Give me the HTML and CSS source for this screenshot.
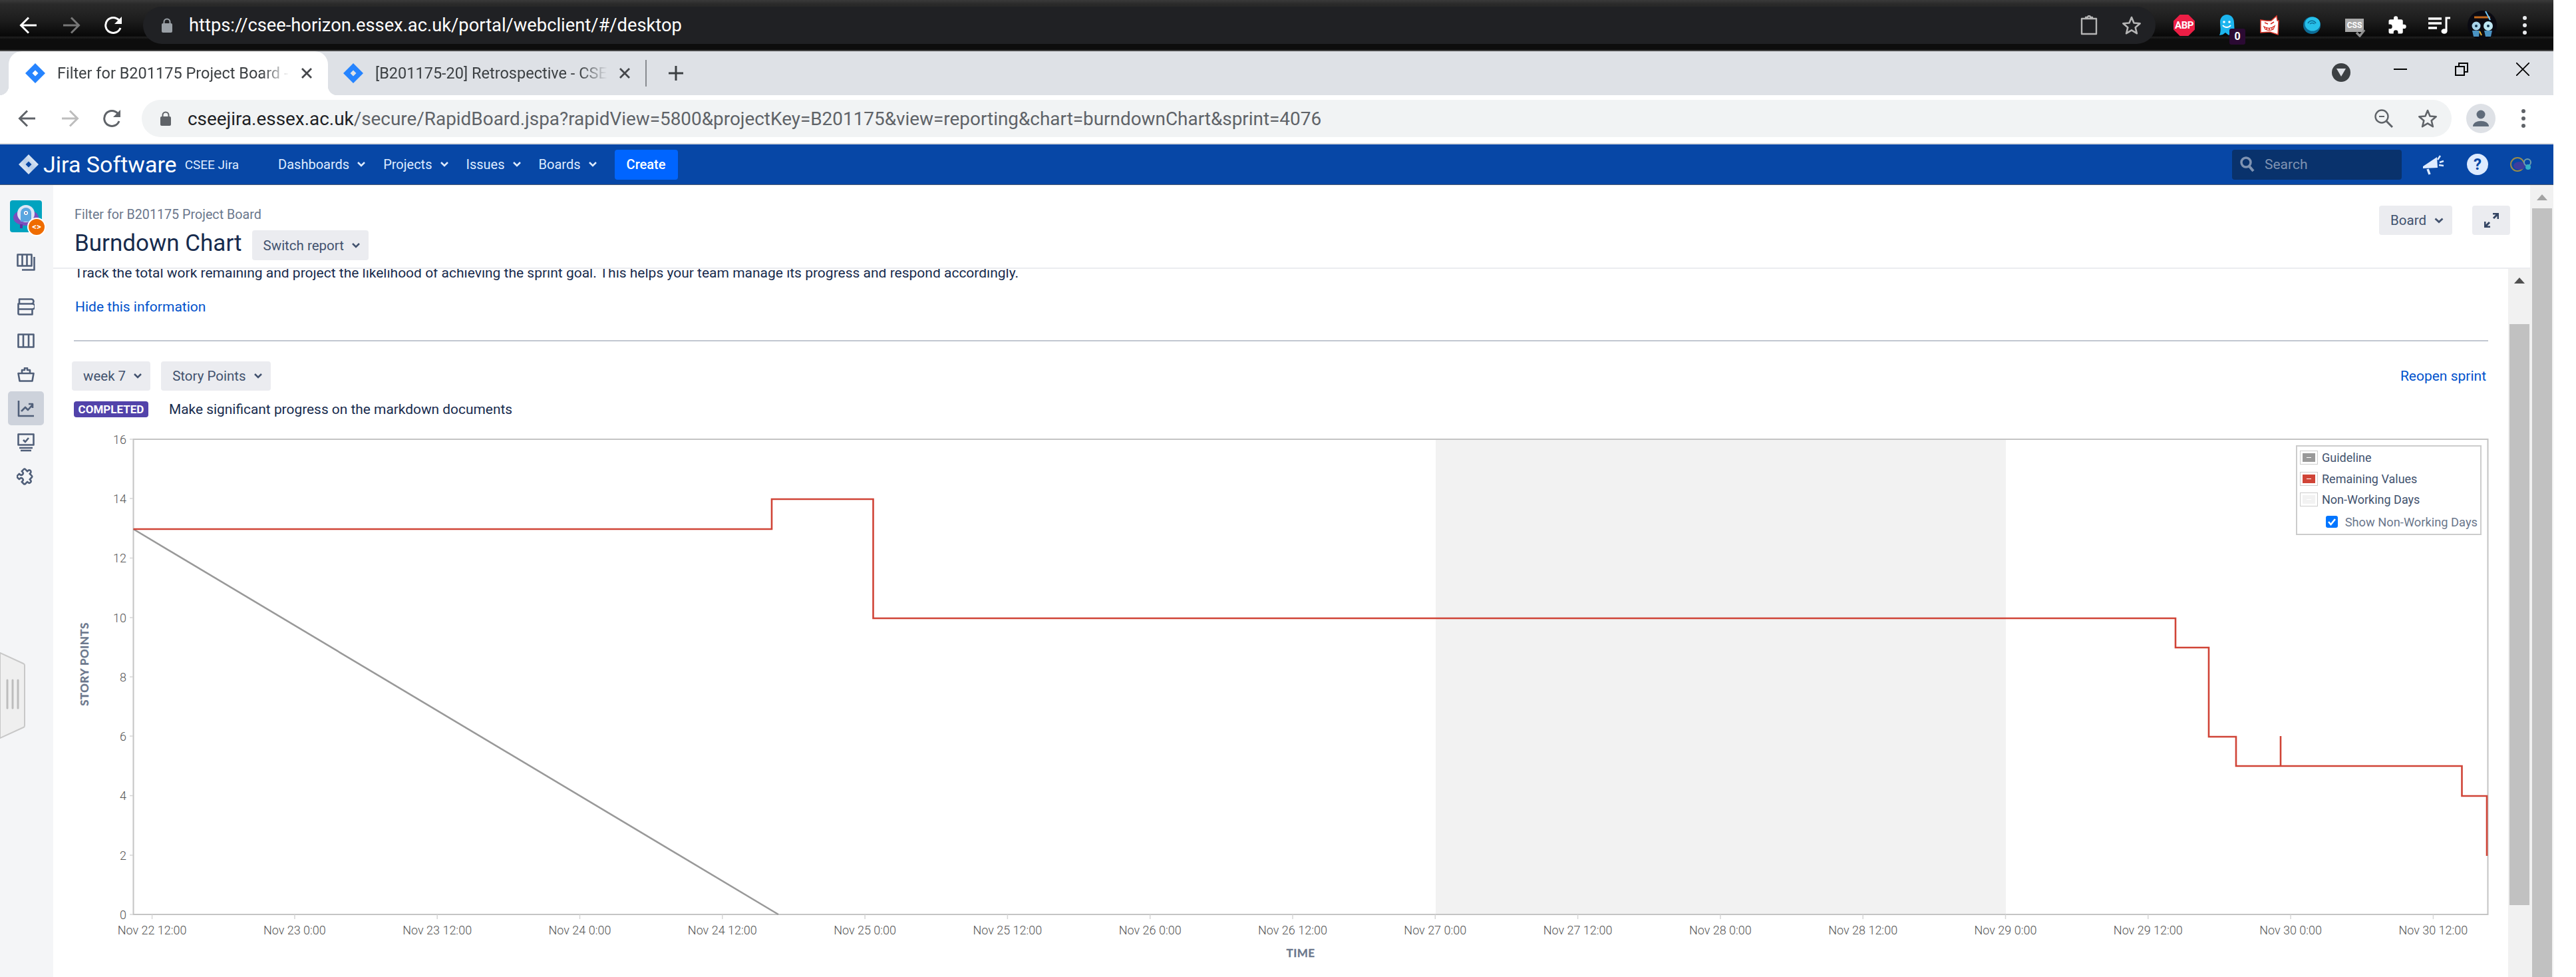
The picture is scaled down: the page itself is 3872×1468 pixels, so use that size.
FILE: index.html
```html
<!DOCTYPE html>
<html lang="en">
<head>
    <meta charset="UTF-8">
    <title>Burndown Chart - CSEE Jira</title>
    <link rel="stylesheet" href="styles.css">
</head>
<body>
<div class="window">
    <!-- outer dark browser toolbar -->
    <div class="dark-bar">
        <div class="nav-btn"><svg width="28" height="28" viewBox="0 0 28 28"><path d="M26 14H3M14 2.5 2.5 14 14 25.5" class="ico-white"/></svg></div>
        <div class="nav-btn"><svg width="28" height="28" viewBox="0 0 28 28"><path d="M2 14h23M14 2.5 25.5 14 14 25.5" class="ico-dim"/></svg></div>
        <div class="nav-btn"><svg width="30" height="28" viewBox="0 0 30 28"><path d="M25 18a11.5 11.5 0 1 1-2-11.5" class="ico-white"/><path d="M27 1v11H16z" fill="#fff"/></svg></div>
        <div class="omni omni-dark">
            <svg class="lock" width="16" height="22" viewBox="0 0 16 22"><path d="M3.5 9V6a4.5 4.5 0 0 1 9 0v3" fill="none" stroke="#9aa0a6" stroke-width="2"/><rect y="8" width="16" height="14" rx="2" fill="#9aa0a6"/></svg>
            <span class="url url-light">https://csee-horizon.essex.ac.uk/portal/webclient/#/desktop</span>
            <svg class="omni-end" width="26" height="30" viewBox="0 0 26 30"><path d="M2 5h22v23H2zM8 5V3h3a2 2 0 0 1 4 0h3v2z" fill="none" stroke="#b5b5b5" stroke-width="2.4" stroke-linejoin="round"/></svg>
            <svg class="omni-star" width="30" height="30" viewBox="0 0 30 30"><path d="m15 3 3.5 8.5 9.2.7-7 6 2.2 9-7.9-4.8-7.9 4.8 2.2-9-7-6 9.2-.7z" fill="none" stroke="#b5b5b5" stroke-width="2.6" stroke-linejoin="round"/></svg>
        </div>
        <div class="ext-row">
            <div class="ext"><div class="abp">ABP</div></div>
            <div class="ext">
                <svg width="26" height="32" viewBox="0 0 26 32"><path d="M13 0c7 0 11 5 11 12l1 18-5-3-4 4-5-4-4 3-5 1c3-6 1-13 1-20C3 5 7 0 13 0z" fill="#1cb5ee"/><circle cx="9" cy="11" r="1.8" fill="#fff"/><circle cx="17" cy="11" r="1.8" fill="#fff"/><path d="M7 16c3 4 9 4 12 0" fill="none" stroke="#fff" stroke-width="2"/></svg>
                <span class="ext-badge">0</span>
            </div>
            <div class="ext"><svg width="30" height="32" viewBox="0 0 30 32"><path d="M2 8c6 1 12 2 16 1l8-7 1 7 2 0-1 21-12-4-14 1z" fill="#fff" stroke="#e03a2e" stroke-width="1.5"/><path d="M7 18c5 3 11 3 16-1l-2 5c-4 2-8 2-12 0z" fill="#fff" stroke="#d9281e" stroke-width="1.2"/><path d="M8 12l5 2M22 11l-5 3M11 19v3M15 20v3M19 19v3" stroke="#d9281e" stroke-width="1.5"/></svg></div>
            <div class="ext"><svg width="28" height="28" viewBox="0 0 28 28"><circle cx="14" cy="14" r="13" fill="#0d6c96"/><ellipse cx="15" cy="12" rx="11.5" ry="10.5" fill="#27c0ea"/><path d="M8 11c3-5 9-5 12 0M11 12c2-2 5-2 7 0" fill="none" stroke="#0d6c96" stroke-width="1.5"/></svg></div>
            <div class="ext"><div class="css-ico">CSS<svg class="css-check" width="16" height="14" viewBox="0 0 16 14"><path d="m2 7 5 5 7-9" fill="none" stroke="#8e8e8e" stroke-width="3.5"/></svg></div></div>
            <div class="ext"><svg width="30" height="30" viewBox="0 0 24 24"><path fill="#fff" d="M20.5 11H19V7a2 2 0 0 0-2-2h-4V3.5a2.5 2.5 0 0 0-5 0V5H4a2 2 0 0 0-2 2v3.8h1.5a2.7 2.7 0 0 1 0 5.4H2V20a2 2 0 0 0 2 2h3.8v-1.5a2.7 2.7 0 0 1 5.4 0V22H17a2 2 0 0 0 2-2v-4h1.5a2.5 2.5 0 0 0 0-5z"/></svg></div>
            <div class="ext"><svg width="34" height="26" viewBox="0 0 34 26"><path d="M0 3h20M0 10h20M0 17h13" stroke="#fff" stroke-width="3.4"/><path d="M27 22V2h6" fill="none" stroke="#fff" stroke-width="3"/><ellipse cx="24" cy="22" rx="4.5" ry="3.8" fill="#fff"/></svg></div>
            <div class="ext"><svg width="44" height="44" viewBox="0 0 44 44"><circle cx="22" cy="22" r="22" fill="#0a0a12"/><path d="M10 10h24" stroke="#c56a1c" stroke-width="3"/><path d="M27 1l7 13" stroke="#6fc6f4" stroke-width="2"/><circle cx="13" cy="23" r="6.5" fill="#a9d3ea"/><circle cx="31" cy="23" r="7" fill="#bfe6f2"/><path d="M7 30h11l-1 9h-8zM25 30h12l-2 9h-8z" fill="#4a93c4"/><circle cx="13" cy="23" r="2" fill="#10304a"/><circle cx="31" cy="23" r="2" fill="#10304a"/><path d="M18 31l3 6" stroke="#e8b23a" stroke-width="2"/></svg></div>
            <div class="ext"><div class="kebab kebab-light"><i></i><i></i><i></i></div></div>
        </div>
    </div>

    <!-- tab strip -->
    <div class="tabstrip">
        <div class="tab tab-active">
            <svg class="favicon" width="30" height="30" viewBox="0 0 30 30"><path fill-rule="evenodd" fill="#2684ff" d="M15 0 30 15 15 30 0 15zM15 10.5 10.5 15 15 19.5 19.5 15z"/></svg>
            <span class="tab-title">Filter for B201175 Project Board - CSEE Jira</span>
            <svg class="tab-x" width="16" height="16" viewBox="0 0 16 16"><path d="m1 1 14 14M15 1 1 15" stroke="#45474b" stroke-width="2.8"/></svg>
        </div>
        <div class="tab tab-idle">
            <svg class="favicon" width="30" height="30" viewBox="0 0 30 30"><path fill-rule="evenodd" fill="#2684ff" d="M15 0 30 15 15 30 0 15zM15 10.5 10.5 15 15 19.5 19.5 15z"/></svg>
            <span class="tab-title">[B201175-20] Retrospective - CSEE Jira</span>
            <svg class="tab-x" width="16" height="16" viewBox="0 0 16 16"><path d="m1 1 14 14M15 1 1 15" stroke="#45474b" stroke-width="2.8"/></svg>
        </div>
        <div class="tab-sep"></div>
        <svg class="tab-plus" width="24" height="24" viewBox="0 0 24 24"><path d="M12 1v22M1 12h22" stroke="#3c4043" stroke-width="3"/></svg>
        <div class="tab-search"><svg width="14" height="12" viewBox="0 0 14 12"><path d="M0 0h14L7 12z" fill="#dee1e6"/></svg></div>
        <div class="win-controls">
            <div class="win-btn"><svg width="20" height="20" viewBox="0 0 20 20"><path d="M0 10h20" stroke="#000" stroke-width="2"/></svg></div>
            <div class="win-btn"><svg width="20" height="20" viewBox="0 0 20 20"><path d="M1 6h13v13H1zM6 6V1h13v13h-5" fill="none" stroke="#000" stroke-width="2"/></svg></div>
            <div class="win-btn"><svg width="20" height="20" viewBox="0 0 20 20"><path d="m0 0 20 20M20 0 0 20" stroke="#000" stroke-width="1.8"/></svg></div>
        </div>
    </div>

    <!-- light browser toolbar -->
    <div class="toolbar">
        <div class="nav-btn"><svg width="28" height="28" viewBox="0 0 28 28"><path d="M26 14H3M14 2.5 2.5 14 14 25.5" class="ico-grey"/></svg></div>
        <div class="nav-btn"><svg width="28" height="28" viewBox="0 0 28 28"><path d="M2 14h23M14 2.5 25.5 14 14 25.5" class="ico-faint"/></svg></div>
        <div class="nav-btn"><svg width="30" height="28" viewBox="0 0 30 28"><path d="M25 18a11.5 11.5 0 1 1-2-11.5" class="ico-grey"/><path d="M27 1v11H16z" fill="#5f6368"/></svg></div>
        <div class="omni omni-light">
            <svg class="lock" width="16" height="22" viewBox="0 0 16 22"><path d="M3.5 9V6a4.5 4.5 0 0 1 9 0v3" fill="none" stroke="#5f6368" stroke-width="2"/><rect y="8" width="16" height="14" rx="2" fill="#5f6368"/></svg>
            <span class="url url-dark"><b>cseejira.essex.ac.uk</b>/secure/RapidBoard.jspa?rapidView=5800&amp;projectKey=B201175&amp;view=reporting&amp;chart=burndownChart&amp;sprint=4076</span>
            <svg class="omni-end" width="28" height="28" viewBox="0 0 28 28"><circle cx="11" cy="11" r="9.5" fill="none" stroke="#5f6368" stroke-width="2.4"/><path d="M7 11h8" stroke="#5f6368" stroke-width="2"/><path d="m18 18 9 9" stroke="#5f6368" stroke-width="3"/></svg>
            <svg class="omni-star" width="30" height="30" viewBox="0 0 30 30"><path d="m15 3 3.5 8.5 9.2.7-7 6 2.2 9-7.9-4.8-7.9 4.8 2.2-9-7-6 9.2-.7z" fill="none" stroke="#5f6368" stroke-width="2.6" stroke-linejoin="round"/></svg>
        </div>
        <div class="toolbar-end">
            <div class="ext"><div class="profile"><svg width="26" height="26" viewBox="0 0 26 26"><circle cx="13" cy="7" r="6.5" fill="#5f6b7a"/><path d="M1 25c0-11 24-11 24 0z" fill="#5f6b7a"/></svg></div></div>
            <div class="ext"><div class="kebab kebab-grey"><i></i><i></i><i></i></div></div>
        </div>
    </div>

    <!-- jira top nav -->
    <div class="navbar">
        <svg class="jira-logo" width="30" height="30" viewBox="0 0 30 30"><defs><linearGradient id="logoFade" x1="0" y1="1" x2="1" y2="0"><stop offset="0" stop-color="#fff"/><stop offset=".5" stop-color="#b8cde8"/><stop offset="1" stop-color="#fff"/></linearGradient></defs><path fill-rule="evenodd" fill="url(#logoFade)" d="M15 0 30 15 15 30 0 15zM15 10.5 10.5 15 15 19.5 19.5 15z"/></svg>
        <span class="brand">Jira Software</span>
        <span class="brand-sub">CSEE Jira</span>
        <div class="nav-menu">
            <a class="nav-item">Dashboards<svg class="chev" width="12" height="8" viewBox="0 0 12 8"><path d="m1 1 5 5 5-5" fill="none" stroke="#deebff" stroke-width="2.5"/></svg></a>
            <a class="nav-item">Projects<svg class="chev" width="12" height="8" viewBox="0 0 12 8"><path d="m1 1 5 5 5-5" fill="none" stroke="#deebff" stroke-width="2.5"/></svg></a>
            <a class="nav-item">Issues<svg class="chev" width="12" height="8" viewBox="0 0 12 8"><path d="m1 1 5 5 5-5" fill="none" stroke="#deebff" stroke-width="2.5"/></svg></a>
            <a class="nav-item">Boards<svg class="chev" width="12" height="8" viewBox="0 0 12 8"><path d="m1 1 5 5 5-5" fill="none" stroke="#deebff" stroke-width="2.5"/></svg></a>
        </div>
        <button class="create-btn">Create</button>
        <div class="nav-right">
            <div class="nav-search">
                <svg width="22" height="24" viewBox="0 0 22 24"><circle cx="9" cy="9" r="7" fill="none" stroke="#7f93b2" stroke-width="3.5"/><path d="m14 15 6 7" stroke="#7f93b2" stroke-width="4"/></svg>
                <span>Search</span>
            </div>
            <svg class="nav-ico nav-feedback" width="32" height="32" viewBox="0 0 32 32"><path d="M0 19 21 5l1 16-22 1z" fill="#deebff"/><path d="m7 23 3 8" stroke="#deebff" stroke-width="3.5"/><path d="m22 9 4-6M25 13l6-2M24 17l7 1" stroke="#deebff" stroke-width="2.5"/></svg>
            <div class="nav-help">?</div>
            <svg class="nav-avatar" width="34" height="26" viewBox="0 0 34 26"><circle cx="11" cy="13" r="10" fill="none" stroke="#9b8b4a" stroke-width="2"/><ellipse cx="14" cy="15" rx="9" ry="6" fill="#3d3d9e"/><circle cx="26" cy="10" r="5" fill="none" stroke="#6f9fae" stroke-width="2"/><circle cx="27" cy="17" r="4" fill="#33b0c8"/></svg>
        </div>
    </div>

    <div class="main">
        <div class="sidebar">
            <div class="project-avatar">
                <svg width="48" height="48" viewBox="0 0 48 48"><rect width="48" height="48" rx="4" fill="#00a3bf"/><ellipse cx="24" cy="26" rx="19" ry="12" fill="#7a4fbd"/><path d="M15 36h4v6h-4zM28 36h4v4h-4z" fill="#5a33a0"/><circle cx="24" cy="20" r="13" fill="#dfe6f6"/><path d="M16 32V19a8 8 0 0 1 16 0v13z" fill="#5aa6e0"/><circle cx="24" cy="19" r="3" fill="#fff"/><circle cx="24" cy="19" r="1.2" fill="#3a4f8f"/></svg>
                <div class="avatar-badge">&lt;&gt;</div>
            </div>
            <div class="side-ico side-first"><svg width="28" height="26" viewBox="0 0 28 26"><path d="M1.5 1.5h21v17h-21zM8.5 1.5v17M15.5 1.5v17" class="side-stroke"/><path d="M26.5 5v19.5H8" class="side-stroke"/></svg></div>
            <div class="side-ico"><svg width="26" height="26" viewBox="0 0 26 26"><path d="M3 1.5h18a3 3 0 0 1 0 7H3zM1.5 8.5h21a3 3 0 0 1 0 8h-21zM1.5 16.5h21v8H3a1.5 1.5 0 0 1-1.5-1.5z" class="side-stroke"/></svg></div>
            <div class="side-ico"><svg width="26" height="22" viewBox="0 0 26 22"><path d="M1.5 1.5h23v19h-23zM9 1.5v19M17 1.5v19" class="side-stroke"/></svg></div>
            <div class="side-ico"><svg width="26" height="22" viewBox="0 0 26 22"><path d="M7 9V4h4V1h4v3h4v5M1.5 9h23l-2 11.5H3.5z" class="side-stroke"/></svg></div>
            <div class="side-ico side-selected"><svg width="26" height="26" viewBox="0 0 26 26"><path d="M2 1v23h23" class="side-stroke"/><path d="m6 17 6-6 4 4 7-8M17 6h6v6" class="side-stroke"/></svg></div>
            <div class="side-ico"><svg width="26" height="28" viewBox="0 0 26 28"><path d="M1.5 1.5h23v16h-23zM3 22h20M5 26h16" class="side-stroke"/><path d="m9 10 3 3 5-6" class="side-stroke"/></svg></div>
            <div class="side-ico"><svg width="28" height="28" viewBox="0 0 24 24"><path class="side-stroke" d="M20.5 11H19V7a2 2 0 0 0-2-2h-4V3.5a2.5 2.5 0 0 0-5 0V5H4a2 2 0 0 0-2 2v3.8h1.5a2.7 2.7 0 0 1 0 5.4H2V20a2 2 0 0 0 2 2h3.8v-1.5a2.7 2.7 0 0 1 5.4 0V22H17a2 2 0 0 0 2-2v-4h1.5a2.5 2.5 0 0 0 0-5z" transform="rotate(45 12 12) scale(.86) translate(2 2)"/></svg></div>
        </div>

        <div class="content">
            <div class="page-head">
                <div>
                    <div class="board-name">Filter for B201175 Project Board</div>
                    <div class="title-row">
                        <h1>Burndown Chart</h1>
                        <button class="aui-btn switch-btn">Switch report<svg class="chev" width="12" height="8" viewBox="0 0 12 8"><path d="m1 1 5 5 5-5" fill="none" stroke="#42526e" stroke-width="2.5"/></svg></button>
                    </div>
                </div>
                <div class="head-actions">
                    <button class="aui-btn">Board<svg class="chev" width="14" height="9" viewBox="0 0 14 9"><path d="m1.5 1.5 5.5 5 5.5-5" fill="none" stroke="#42526e" stroke-width="2.8"/></svg></button>
                    <button class="aui-btn expand-btn"><svg width="22" height="22" viewBox="0 0 22 22"><path d="M13 1h8v8M21 1l-7 7M9 21H1v-8M1 21l7-7" fill="none" stroke="#344563" stroke-width="3"/></svg></button>
                </div>
            </div>

            <div class="panel">
                <div class="panel-body">
                    <p class="intro">Track the total work remaining and project the likelihood of achieving the sprint goal. This helps your team manage its progress and respond accordingly.</p>
                    <a class="hide-link">Hide this information</a>
                    <hr class="rule">
                    <div class="filters">
                        <button class="aui-btn">week 7<svg class="chev" width="12" height="8" viewBox="0 0 12 8"><path d="m1 1 5 5 5-5" fill="none" stroke="#42526e" stroke-width="2.5"/></svg></button>
                        <button class="aui-btn">Story Points<svg class="chev" width="12" height="8" viewBox="0 0 12 8"><path d="m1 1 5 5 5-5" fill="none" stroke="#42526e" stroke-width="2.5"/></svg></button>
                        <a class="reopen">Reopen sprint</a>
                    </div>
                    <div class="sprint-row">
                        <span class="lozenge">COMPLETED</span>
                        <span class="sprint-goal">Make significant progress on the markdown documents</span>
                    </div>

                    <div class="chart">
                        <svg class="chart-svg" width="3630" height="818" viewBox="111 650 3630 818">
                            <rect x="2158" y="660" width="857" height="714" class="nonworking"/>
                            <path d="M200.5 660H3739.5V1374H200.5Z" class="frame"/>
                            <path d="M195 660h5M195 749h5M195 838.5h5M195 928h5M195 1017h5M195 1106h5M195 1195.5h5M195 1285h5M195 1374h5" class="ticks"/>
                            <path d="M228.6 1374v7M442.9 1374v7M657.2 1374v7M871.5 1374v7M1085.8 1374v7M1300.1 1374v7M1514.4 1374v7M1728.7 1374v7M1943 1374v7M2157.3 1374v7M2371.6 1374v7M2585.9 1374v7M2800.2 1374v7M3014.5 1374v7M3228.8 1374v7M3443.1 1374v7M3657.4 1374v7" class="ticks"/>

                            <text x="190" y="667" class="tick-y">16</text>
                            <text x="190" y="756" class="tick-y">14</text>
                            <text x="190" y="845" class="tick-y">12</text>
                            <text x="190" y="935" class="tick-y">10</text>
                            <text x="190" y="1024" class="tick-y">8</text>
                            <text x="190" y="1113" class="tick-y">6</text>
                            <text x="190" y="1202" class="tick-y">4</text>
                            <text x="190" y="1292" class="tick-y">2</text>
                            <text x="190" y="1381" class="tick-y">0</text>

                            <text x="228.6" y="1404" class="tick-x">Nov 22 12:00</text>
                            <text x="442.9" y="1404" class="tick-x">Nov 23 0:00</text>
                            <text x="657.2" y="1404" class="tick-x">Nov 23 12:00</text>
                            <text x="871.5" y="1404" class="tick-x">Nov 24 0:00</text>
                            <text x="1085.8" y="1404" class="tick-x">Nov 24 12:00</text>
                            <text x="1300.1" y="1404" class="tick-x">Nov 25 0:00</text>
                            <text x="1514.4" y="1404" class="tick-x">Nov 25 12:00</text>
                            <text x="1728.7" y="1404" class="tick-x">Nov 26 0:00</text>
                            <text x="1943" y="1404" class="tick-x">Nov 26 12:00</text>
                            <text x="2157.3" y="1404" class="tick-x">Nov 27 0:00</text>
                            <text x="2371.6" y="1404" class="tick-x">Nov 27 12:00</text>
                            <text x="2585.9" y="1404" class="tick-x">Nov 28 0:00</text>
                            <text x="2800.2" y="1404" class="tick-x">Nov 28 12:00</text>
                            <text x="3014.5" y="1404" class="tick-x">Nov 29 0:00</text>
                            <text x="3228.8" y="1404" class="tick-x">Nov 29 12:00</text>
                            <text x="3443.1" y="1404" class="tick-x">Nov 30 0:00</text>
                            <text x="3657.4" y="1404" class="tick-x">Nov 30 12:00</text>

                            <text x="1955" y="1438" class="axis-title">TIME</text>
                            <text x="133" y="998" class="axis-title" transform="rotate(-90 133 998)">STORY POINTS</text>

                            <path d="M200.5 795 1170 1374" class="guideline"/>
                            <path d="M200.5 795H1160V750H1312.5V929H3270V973H3320V1107H3361V1151H3700.5V1196H3738V1286" class="remaining"/>
                            <path d="M3428 1151V1106" class="remaining"/>
                        </svg>

                        <div class="legend">
                            <div class="legend-row"><span class="swatch swatch-grey"><i></i></span>Guideline</div>
                            <div class="legend-row"><span class="swatch swatch-red"><i></i></span>Remaining Values</div>
                            <div class="legend-row"><span class="swatch swatch-pale"><i></i></span>Non-Working Days</div>
                            <label class="legend-check"><span class="check-box"><svg width="14" height="14" viewBox="0 0 14 14"><path d="m2 7 3.5 4L12 3" fill="none" stroke="#fff" stroke-width="2.6"/></svg></span>Show Non-Working Days</label>
                        </div>
                    </div>
                </div>
                <div class="scrollbar scrollbar-inner">
                    <div class="scroll-up"><span class="arrow arrow-dark"></span></div>
                    <div class="thumb thumb-inner"></div>
                </div>
            </div>
        </div>

        <div class="scrollbar scrollbar-outer">
            <div class="scroll-up"><span class="arrow arrow-soft"></span></div>
            <div class="thumb"></div>
        </div>
    </div>

    <!-- collapsed panel handle that sits over the sidebar -->
    <svg class="side-handle" width="40" height="130" viewBox="0 0 40 130"><path d="M0 1 35 17a3 3 0 0 1 2 3V110a3 3 0 0 1-2 3L0 129z" fill="#efefef" stroke="#c8c8c8" stroke-width="2"/><path d="M11 42v42M19 42v42M27 42v42" stroke="#bdbdbd" stroke-width="3" stroke-linecap="round"/></svg>
</div>
</body>
</html>
```

FILE: styles.css
```css
* {
    box-sizing: border-box;
}
html, body {
    margin: 0;
    padding: 0;
    height: 100%;
    background: #fff;
    overflow: hidden;
}
body {
    width: 3872px;
    height: 1468px;
    font-family: Roboto, "Noto Sans", sans-serif;
    color: #172b4d;
}
.window {
    position: relative;
    width: 3838px;
    height: 1468px;
    display: flex;
    flex-direction: column;
}
svg {
    display: block;
    flex: none;
}

/* browser chrome */
.dark-bar {
    height: 77px;
    flex: none;
    display: flex;
    align-items: center;
    padding: 0 0 1px 11px;
    background: linear-gradient(#3a3a3a 0, #2a2a2a 6px, #1d1d1d 30px, #080808 54px, #202020 56px, #0d0d0d 59px, #0d0d0d 75px, #444 75px);
}
.toolbar {
    height: 74px;
    flex: none;
    display: flex;
    align-items: center;
    padding: 0 0 2px 9px;
    background: #fff;
    border-bottom: 2px solid #dadce0;
}
.nav-btn {
    width: 64px;
    display: flex;
    justify-content: center;
}
.ico-white, .ico-dim, .ico-grey, .ico-faint {
    fill: none;
    stroke-width: 3;
}
.ico-white { stroke: #fff; }
.ico-dim { stroke: #777; }
.ico-grey { stroke: #5f6368; }
.ico-faint { stroke: #bdbdbd; }
.omni {
    height: 56px;
    border-radius: 28px;
    display: flex;
    align-items: center;
    margin-left: 12px;
    padding-left: 28px;
}
.omni-dark {
    width: 3025px;
    background: #202124;
}
.omni-light {
    width: 3472px;
    background: #f1f3f4;
}
.url {
    margin-left: 25px;
    white-space: nowrap;
    flex: 1;
}
.url b {
    font-weight: 400;
    color: #202124;
}
.url-light {
    font-size: 27.3px;
    color: #fff;
}
.url-dark {
    font-size: 27.9px;
    color: #5f6368;
}
.omni-end {
    margin-right: 36px;
}
.omni-star {
    margin-right: 21px;
}
.omni-light .omni-end {
    margin-right: 37px;
}
.ext-row {
    display: flex;
    margin-left: 11px;
}
.toolbar-end {
    display: flex;
    margin-left: 12px;
}
.ext {
    position: relative;
    width: 64px;
    height: 44px;
    display: flex;
    align-items: center;
    justify-content: center;
}
.abp {
    width: 32px;
    height: 32px;
    background: #ed1e45;
    color: #fff;
    font-size: 15px;
    font-weight: 700;
    letter-spacing: -.5px;
    line-height: 32px;
    text-align: center;
    clip-path: polygon(30% 0, 70% 0, 100% 30%, 100% 70%, 70% 100%, 30% 100%, 0 70%, 0 30%);
}
.ext-badge {
    position: absolute;
    left: 36px;
    top: 27px;
    width: 24px;
    height: 24px;
    border-radius: 3px;
    background: #2b0a33;
    color: #fff;
    font-size: 16px;
    font-weight: 700;
    line-height: 24px;
    text-align: center;
}
.css-ico {
    position: relative;
    width: 28px;
    height: 20px;
    background: #a9a9a9;
    color: #fff;
    font-size: 12px;
    font-weight: 700;
    line-height: 20px;
    text-align: center;
}
.css-check {
    position: absolute;
    right: -3px;
    bottom: -8px;
}
.kebab {
    display: flex;
    flex-direction: column;
    gap: 5px;
}
.kebab i {
    width: 6px;
    height: 6px;
    border-radius: 50%;
}
.kebab-light i { background: #e8eaed; }
.kebab-grey i { background: #5f6368; }
.profile {
    width: 44px;
    height: 44px;
    border-radius: 50%;
    background: #dee1e6;
    display: flex;
    align-items: center;
    justify-content: center;
}

/* tabs */
.tabstrip {
    height: 66px;
    flex: none;
    display: flex;
    padding-left: 13px;
    background: #dee1e6;
}
.tab {
    position: relative;
    display: flex;
    align-items: center;
    height: 66px;
    color: #3c4043;
}
.tab-active {
    width: 480px;
    padding-left: 25px;
    background: #fff;
    border-radius: 20px 20px 0 0;
}
.tab-active::before, .tab-active::after {
    content: "";
    position: absolute;
    bottom: 0;
    width: 14px;
    height: 14px;
}
.tab-active::before {
    left: -14px;
    background: radial-gradient(circle at 0 0, #dee1e6 14px, #fff 14.5px);
}
.tab-active::after {
    right: -14px;
    background: radial-gradient(circle at 100% 0, #dee1e6 14px, #fff 14.5px);
}
.tab-idle {
    width: 477px;
    padding-left: 23px;
}
.tab-title {
    width: 349px;
    margin-left: 18px;
    font-size: 23.5px;
    white-space: nowrap;
    overflow: hidden;
    -webkit-mask-image: linear-gradient(to right, #000 88%, transparent 100%);
    mask-image: linear-gradient(to right, #000 88%, transparent 100%);
}
.tab-x {
    margin-left: 18px;
}
.tab-sep {
    width: 2px;
    height: 40px;
    margin-top: 13px;
    background: #888b90;
}
.tab-plus {
    align-self: center;
    margin-left: 32px;
}
.tab-search {
    width: 28px;
    height: 28px;
    margin-top: 18px;
    margin-left: auto;
    margin-right: 29px;
    border-radius: 50%;
    background: #3c4043;
    display: flex;
    align-items: center;
    justify-content: center;
}
.win-controls {
    display: flex;
    height: 54px;
}
.win-btn {
    width: 92px;
    display: flex;
    align-items: center;
    justify-content: center;
}

/* jira nav */
.navbar {
    height: 61px;
    flex: none;
    display: flex;
    align-items: center;
    padding-left: 28px;
    background: #0747a6;
    border-bottom: 1px solid #4a5a70;
    color: #deebff;
}
.brand {
    margin-left: 7px;
    font-size: 34px;
    font-weight: 400;
    color: #fff;
}
.brand-sub {
    margin-left: 12px;
    font-size: 19px;
}
.nav-menu {
    display: flex;
    margin-left: 59px;
}
.nav-item {
    display: flex;
    align-items: center;
    margin-right: 27px;
    font-size: 20px;
}
.nav-item .chev, .aui-btn .chev {
    margin-left: 12px;
}
.create-btn {
    width: 95px;
    height: 45px;
    border: none;
    border-radius: 4px;
    background: #0065ff;
    color: #fff;
    font-family: inherit;
    font-size: 20px;
    font-weight: 500;
}
.nav-right {
    display: flex;
    align-items: center;
    margin-left: auto;
}
.nav-search {
    width: 255px;
    height: 45px;
    display: flex;
    align-items: center;
    gap: 15px;
    padding-left: 12px;
    border-radius: 4px;
    background: #09326c;
    color: #7f93b2;
    font-size: 21px;
}
.nav-feedback {
    margin-left: 32px;
}
.nav-help {
    width: 32px;
    height: 32px;
    margin-left: 34px;
    border-radius: 50%;
    background: #deebff;
    color: #0747a6;
    font-size: 24px;
    font-weight: 700;
    line-height: 32px;
    text-align: center;
}
.nav-avatar {
    margin: 0 31px 0 33px;
}

/* page body */
.main {
    flex: 1;
    min-height: 0;
    display: flex;
}
.sidebar {
    width: 80px;
    flex: none;
    background: #f4f5f7;
    display: flex;
    flex-direction: column;
    align-items: center;
    padding-top: 23px;
}
.project-avatar {
    position: relative;
    width: 48px;
    height: 48px;
    margin-left: -2px;
}
.avatar-badge {
    position: absolute;
    left: 26px;
    top: 26px;
    width: 28px;
    height: 28px;
    border: 2px solid #fff;
    border-radius: 50%;
    background: #ef6c00;
    color: #fff;
    font-size: 13px;
    font-weight: 700;
    line-height: 24px;
    text-align: center;
}
.side-ico {
    width: 54px;
    height: 51px;
    margin-left: -2px;
    border-radius: 5px;
    display: flex;
    align-items: center;
    justify-content: center;
}
.side-first {
    margin-top: 19px;
    margin-bottom: 16px;
}
.side-selected {
    background: #cdd2db;
}
.side-stroke {
    fill: none;
    stroke: #505f79;
    stroke-width: 2.6;
    stroke-linejoin: round;
}
.side-handle {
    position: absolute;
    left: 0;
    top: 980px;
}
.content {
    flex: 1;
    min-width: 0;
    display: flex;
    flex-direction: column;
}
.page-head {
    height: 126px;
    flex: none;
    display: flex;
    justify-content: space-between;
    padding: 33px 30px 0 32px;
    border-bottom: 2px solid #ebecf0;
}
.board-name {
    font-size: 19.7px;
    line-height: 24px;
    color: #6b778c;
}
.title-row {
    display: flex;
    align-items: flex-start;
    gap: 15px;
    margin-top: 11px;
}
h1 {
    margin: -3px 0 0;
    font-size: 35px;
    font-weight: 400;
    line-height: 45px;
    color: #172b4d;
}
.aui-btn {
    height: 44px;
    display: inline-flex;
    align-items: center;
    padding: 0 13px 0 17px;
    border: none;
    border-radius: 4px;
    background: #ebecf0;
    color: #42526e;
    font-family: inherit;
    font-size: 20.5px;
}
.switch-btn {
    height: 45px;
}
.head-actions {
    display: flex;
    gap: 30px;
    margin-top: -2px;
}
.expand-btn {
    width: 57px;
    justify-content: center;
    padding: 0;
}
.panel {
    flex: 1;
    min-height: 0;
    display: flex;
}
.panel-body {
    flex: 1;
    min-width: 0;
    padding: 0 30px 0 31px;
    overflow: hidden;
}
.intro {
    margin: -9px 0 0 1px;
    font-size: 21px;
    line-height: 30px;
    color: #172b4d;
}
.hide-link {
    display: block;
    margin: 21px 0 0 2px;
    font-size: 21px;
    line-height: 30px;
    color: #0052cc;
}
.rule {
    height: 2px;
    margin: 35px 0 0;
    border: none;
    background: #c1c7d0;
}
.filters {
    display: flex;
    align-items: center;
    gap: 16px;
    margin: 30px 0 0 -3px;
}
.reopen {
    margin-left: auto;
    margin-right: 3px;
    font-size: 21px;
    color: #0052cc;
}
.sprint-row {
    display: flex;
    align-items: center;
    gap: 31px;
    height: 24px;
    margin-top: 16px;
}
.lozenge {
    width: 112px;
    height: 24px;
    border-radius: 4px;
    background: #5243aa;
    color: #fff;
    font-size: 17px;
    font-weight: 700;
    line-height: 24px;
    text-align: center;
}
.sprint-goal {
    font-size: 20.9px;
    color: #172b4d;
}

/* chart */
.chart {
    position: relative;
    margin-top: 23px;
}
.chart-svg {
    overflow: visible;
}
.nonworking {
    fill: #f2f2f2;
}
.frame {
    fill: none;
    stroke: #c4c4c4;
    stroke-width: 2;
}
.ticks {
    fill: none;
    stroke: #d6d6d6;
    stroke-width: 1.5;
}
.tick-y, .tick-x {
    font-size: 18px;
    font-weight: 300;
    fill: #545454;
}
.tick-y {
    text-anchor: end;
}
.tick-x {
    text-anchor: middle;
}
.axis-title {
    font-family: Lato, sans-serif;
    font-size: 17px;
    font-weight: 700;
    fill: #6b778c;
    stroke: #6b778c;
    stroke-width: .3px;
    text-anchor: middle;
    letter-spacing: .5px;
}
.guideline {
    fill: none;
    stroke: #999;
    stroke-width: 2.6;
}
.remaining {
    fill: none;
    stroke: #d04437;
    stroke-width: 2.6;
}
.legend {
    position: absolute;
    left: 3340px;
    top: 19px;
    width: 279px;
    height: 135px;
    padding: 1px 4px;
    border: 2px solid #ccc;
    background: #fff;
}
.legend-row {
    display: flex;
    align-items: center;
    height: 31.5px;
    font-size: 18px;
    color: #42526e;
}
.swatch {
    width: 27px;
    height: 21px;
    margin-right: 6px;
    padding: 3px;
    border: 1px solid #ccc;
}
.swatch i {
    display: flex;
    align-items: center;
    justify-content: center;
    height: 100%;
}
.swatch i::after {
    content: "";
    width: 7px;
    height: 1px;
    background: #fff;
}
.swatch-grey i { background: #999; }
.swatch-red i { background: #d04437; }
.swatch-pale i { background: #f2f2f2; }
.legend-check {
    display: flex;
    align-items: center;
    margin: 7px 0 0 39px;
    font-size: 18.3px;
    color: #6b778c;
    white-space: nowrap;
}
.check-box {
    width: 18px;
    height: 18px;
    margin-right: 11px;
    border-radius: 3px;
    background: #0075ff;
    display: flex;
    align-items: center;
    justify-content: center;
}

/* scrollbars */
.scrollbar {
    flex: none;
    background: #f1f1f1;
    display: flex;
    flex-direction: column;
    align-items: center;
}
.scrollbar-inner {
    width: 33px;
}
.scrollbar-outer {
    width: 35px;
}
.scroll-up {
    flex: none;
    display: flex;
    justify-content: center;
}
.scrollbar-inner .scroll-up {
    height: 83px;
    padding-top: 13px;
}
.scrollbar-outer .scroll-up {
    height: 35px;
    padding-top: 14px;
}
.arrow {
    width: 0;
    height: 0;
    border-left: 8px solid transparent;
    border-right: 8px solid transparent;
}
.arrow-dark { border-bottom: 9px solid #505050; }
.arrow-soft { border-bottom: 9px solid #a3a3a3; }
.thumb {
    width: 30px;
    flex: 1;
    background: #c1c1c1;
}
.thumb-inner {
    flex: none;
    height: 873px;
}
```
